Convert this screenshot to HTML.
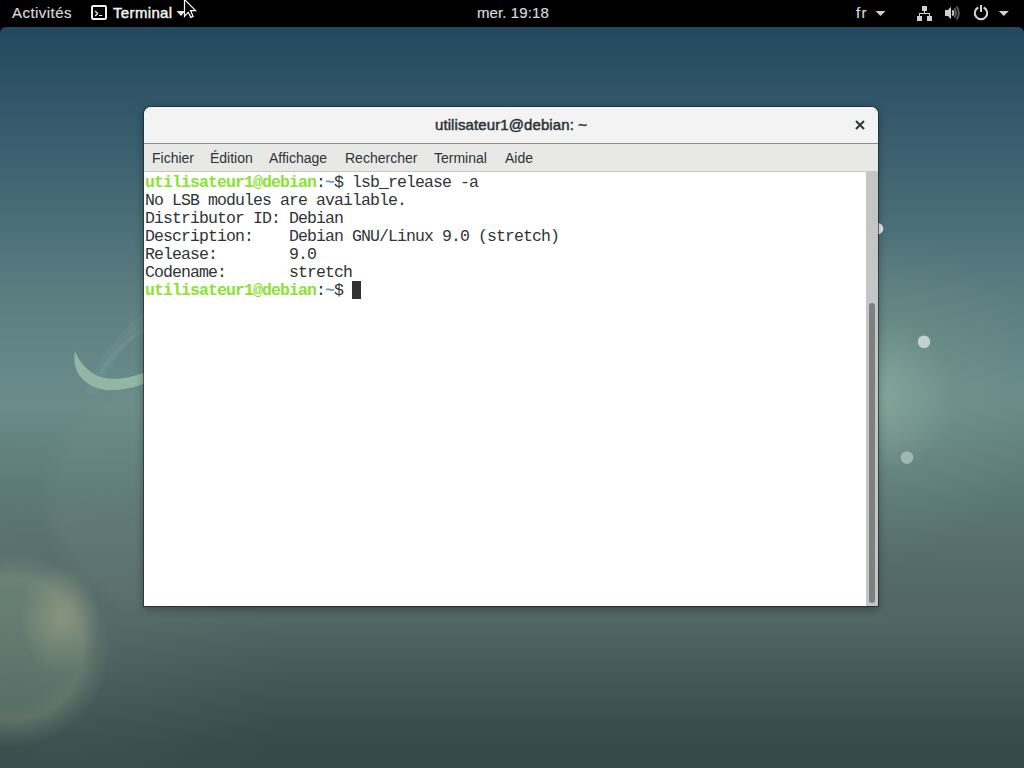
<!DOCTYPE html>
<html><head><meta charset="utf-8">
<style>
*{margin:0;padding:0;box-sizing:border-box}
html,body{width:1024px;height:768px;overflow:hidden;background:#000}
body{position:relative;font-family:"Liberation Sans",sans-serif}
#desk{position:absolute;left:0;top:27px;width:1024px;height:741px;border-radius:6px 6px 0 0;overflow:hidden;
 background:
  radial-gradient(ellipse 40px 55px at 60px 592px, rgba(180,180,140,.42), rgba(180,180,140,0) 100%),
  radial-gradient(circle 98px at 12px 622px, rgba(150,180,150,.24) 0%, rgba(150,180,150,.24) 55%, rgba(160,175,145,.30) 72%, rgba(150,170,140,.12) 88%, rgba(150,170,140,0) 100%),
  radial-gradient(circle 120px at 160px 470px, rgba(140,160,150,.10) 0%, rgba(140,160,150,.10) 85%, rgba(140,160,150,0) 100%),
  radial-gradient(circle 230px at 60px 630px, rgba(120,140,130,.16), rgba(120,140,130,0) 100%),
  radial-gradient(ellipse 70px 80px at 883px 369px, rgba(160,190,170,.38), rgba(160,190,170,0) 100%),
  radial-gradient(ellipse 150px 170px at 883px 369px, rgba(150,180,160,.22), rgba(150,180,160,0) 100%),
  linear-gradient(180deg,#234960 0%,#264c62 2.6%,#365b6c 13.4%,#476b77 24.2%,#5c7f80 36.8%,#678b8a 48.4%,#698b89 51.1%,#5b7775 63.8%,#546c6b 71.9%,#526664 80%,#445859 87.6%,#374949 97%,#364848 100%)}
.abs{position:absolute}
#bar{position:absolute;left:0;top:0;width:1024px;height:27px;background:#000;color:#d8d8d8;font-size:15px}
#bar .t{position:absolute;top:4px;white-space:nowrap;-webkit-text-stroke:0.2px #d8d8d8}
#win{position:absolute;left:144px;top:107px;width:734px;height:499px;background:#fff;border-radius:7px 7px 0 0;
 box-shadow:0 0 0 1px rgba(20,30,30,.55), 0 3px 10px rgba(0,0,0,.35)}
#title{position:absolute;left:0;top:0;width:734px;height:37px;background:#f3f3f3;border-radius:7px 7px 0 0;border-bottom:1px solid #8e8e85}
#title .tt{position:absolute;left:0;width:734px;top:9px;text-align:center;font-size:15px;color:#2e3436;letter-spacing:0.1px;-webkit-text-stroke:0.5px #2e3436}
#menu{position:absolute;left:0;top:37px;width:734px;height:28px;background:#e8e8e7;border-bottom:1px solid #c8c8c5;font-size:14px;color:#2e3436}
#menu span{position:absolute;top:6px}
#term{position:absolute;left:1px;top:65px;width:721px;height:434px;padding-top:2px;background:#fff;font-family:"Liberation Mono",monospace;font-size:16.5px;letter-spacing:-0.9px;line-height:18px;color:#2e3436;white-space:pre}
#sb{position:absolute;left:722px;top:65px;width:12px;height:434px;background:#c4c5c4}
#slider{position:absolute;left:3px;top:131px;width:6px;height:300px;background:#7e8080;border-radius:3px}
.g{color:#8ae234;font-weight:bold}
.b{color:#729fcf;font-weight:bold}
</style></head><body>
<div id="desk"></div>
<svg class="abs" style="left:0;top:0" width="1024" height="768" viewBox="0 0 1024 768">
 <path d="M92 390 Q110 346 146 318" fill="none" stroke="rgba(210,235,225,.045)" stroke-width="12" stroke-linecap="round"/>
 <path d="M101 372 Q117 346 146 329" fill="none" stroke="rgba(210,235,225,.06)" stroke-width="4" stroke-linecap="round"/>
 <path d="M75 351 C72 366 78 379 92 386 C104 392 122 392 146 383 L146 372 C124 380 108 381 96 375 C86 370 79 361 75 351 Z" fill="#93b5a3"/>
 <circle cx="877.5" cy="228.7" r="5.8" fill="#e2e8e7"/>
 <circle cx="924" cy="341.7" r="6.3" fill="#c2d2d0"/>
 <circle cx="907" cy="457.5" r="6.3" fill="#a2b7b1"/>
</svg>
<div id="bar">
 <span class="t" style="left:12px;letter-spacing:0.45px">Activités</span>
 <svg class="abs" style="left:90px;top:4px" width="18" height="17" viewBox="0 0 18 17">
  <rect x="2" y="2" width="14" height="13" rx="1.2" ry="1.2" fill="none" stroke="#f0f0f0" stroke-width="2"/>
  <path d="M5.6 7.5 L7.6 9.5 L5.6 11.5" fill="none" stroke="#f0f0f0" stroke-width="1.3" stroke-linecap="round" stroke-linejoin="round"/>
  <rect x="9" y="11" width="3.2" height="1" fill="#f0f0f0"/>
 </svg>
 <span class="t" style="left:113px;color:#f2f2f2;letter-spacing:0.35px;-webkit-text-stroke:0.45px #f2f2f2">Terminal</span>
 <svg class="abs" style="left:176px;top:10px" width="10" height="7" viewBox="0 0 10 7"><path d="M0.5 1 L9.5 1 L5 6 Z" fill="#e6e6e6"/></svg>
 <span class="t" style="left:477px;letter-spacing:0.1px">mer. 19:18</span>
 <span class="t" style="left:856px;letter-spacing:1.3px">fr</span>
 <svg class="abs" style="left:875px;top:10px" width="11" height="7" viewBox="0 0 11 7"><path d="M0.5 1 L10.5 1 L5.5 6 Z" fill="#d0d0d0"/></svg>
 <svg class="abs" style="left:915px;top:4px" width="20" height="20" viewBox="0 0 20 20" fill="#d0d0d0">
  <rect x="7" y="2" width="5" height="5"/>
  <rect x="9" y="7" width="1" height="3"/>
  <rect x="4" y="9" width="11" height="1"/>
  <rect x="4" y="9" width="1" height="3"/>
  <rect x="14" y="9" width="1" height="3"/>
  <rect x="2" y="12" width="5" height="5"/>
  <rect x="12" y="12" width="5" height="5"/>
 </svg>
 <svg class="abs" style="left:943px;top:4px" width="20" height="20" viewBox="0 0 20 20">
  <path d="M2 6 L5 6 L8 2.8 L8 15.2 L5 12 L2 12 Z" fill="#d0d0d0"/>
  <path d="M9.4 6.4 Q11.4 9 9.4 11.6" fill="none" stroke="#d0d0d0" stroke-width="1.8"/>
  <path d="M11.4 4.4 Q14.6 9 11.4 13.6" fill="none" stroke="#606060" stroke-width="1.9"/>
  <path d="M13.4 2.4 Q18.4 9 13.4 15.8" fill="none" stroke="#585858" stroke-width="1.9"/>
 </svg>
 <svg class="abs" style="left:971px;top:3px" width="20" height="20" viewBox="0 0 20 20">
  <path d="M7.3 4.5 A6.2 6.2 0 1 0 12.7 4.5" fill="none" stroke="#d6d6d6" stroke-width="2"/>
  <rect x="9" y="2" width="2" height="7" fill="#d6d6d6"/>
 </svg>
 <svg class="abs" style="left:998px;top:10px" width="12" height="7" viewBox="0 0 12 7"><path d="M0.8 1 L10.8 1 L5.8 6 Z" fill="#d0d0d0"/></svg>
 <svg class="abs" style="left:182px;top:-2px" width="16" height="22" viewBox="0 0 16 22">
  <path d="M2.5 1.5 L2.5 18.5 L6.2 14.2 L8.9 19.4 L11.1 18.4 L8.6 12.6 L13.6 12.6 Z" fill="#000" stroke="#fff" stroke-width="1.2" stroke-linejoin="miter"/>
 </svg>
</div>
<div id="win">
 <div id="title"><div class="tt">utilisateur1@debian: ~</div>
  <svg class="abs" style="left:710px;top:12px" width="12" height="12" viewBox="0 0 12 12"><path d="M2 2 L10 10 M10 2 L2 10" stroke="#2e3436" stroke-width="2" stroke-linecap="butt"/></svg></div>
 <div id="menu">
  <span style="left:8px">Fichier</span>
  <span style="left:66px">Édition</span>
  <span style="left:125px">Affichage</span>
  <span style="left:201px">Rechercher</span>
  <span style="left:290px">Terminal</span>
  <span style="left:361px">Aide</span>
 </div>
 <div id="term"><span class="g">utilisateur1@debian</span>:<span class="b">~</span>$ lsb_release -a
No LSB modules are available.
Distributor ID:	Debian
Description:	Debian GNU/Linux 9.0 (stretch)
Release:	9.0
Codename:	stretch
<span class="g">utilisateur1@debian</span>:<span class="b">~</span>$ </div>
 <div class="abs" style="left:208px;top:174px;width:9px;height:18px;background:#2e3436"></div>
 <div id="sb"><div id="slider"></div></div>
</div>
</body></html>
